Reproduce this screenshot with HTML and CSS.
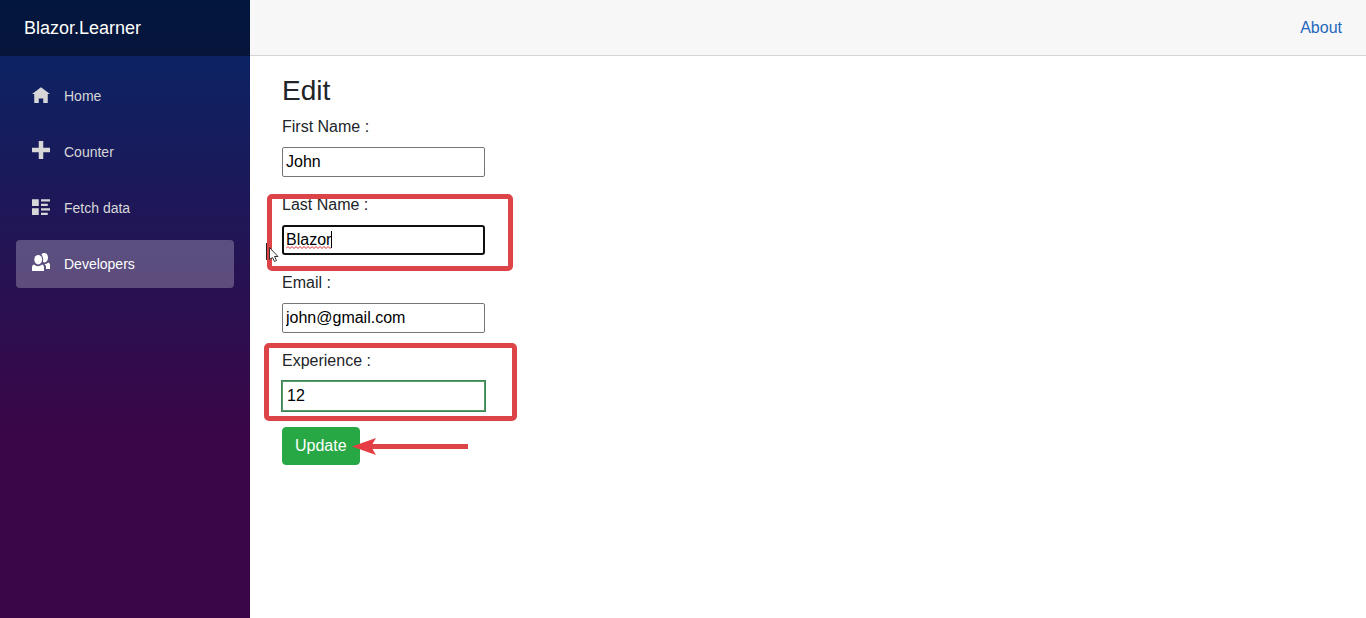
FILE: index.html
```html
<!DOCTYPE html>
<html lang="en">
<head>
<meta charset="utf-8">
<meta name="viewport" content="width=device-width, initial-scale=1">
<title>Blazor.Learner</title>
<link rel="stylesheet" href="styles.css">
</head>
<body>
<div class="app">
  <aside class="sidebar">
    <div class="brand-row"><a class="brand" href="#">Blazor.Learner</a></div>
    <nav class="nav">
      <a class="nav-link" href="#"><svg class="icon" viewBox="0 -1 8 8" aria-hidden="true"><path d="M4 0l-4 3h1v4h2v-2h2v2h2v-4.03l1 .03-4-3z"/></svg><span>Home</span></a>
      <a class="nav-link" href="#"><svg class="icon" viewBox="0 0 8 8" aria-hidden="true"><path d="M3 0v3h-3v2h3v3h2v-3h3v-2h-3v-3h-2z"/></svg><span>Counter</span></a>
      <a class="nav-link" href="#"><svg class="icon" viewBox="0 -1 8 8" aria-hidden="true"><path d="M0 0v3h3v-3h-3zm4 0v1h4v-1h-4zm0 2v1h3v-1h-3zm-4 2v3h3v-3h-3zm4 0v1h4v-1h-4zm0 2v1h3v-1h-3z"/></svg><span>Fetch data</span></a>
      <a class="nav-link active" href="#" aria-current="page"><svg class="icon" viewBox="0 0 18 18" aria-hidden="true"><ellipse cx="6.200" cy="6.700" rx="3.900" ry="4.800"/><path d="M0 18v-4q0-2 1.800-2.600 4.200 3.600 8.400 0 1.800.6 1.800 2.600v4z"/><path d="M9.300 1.400C10.300.4 11.300 0 12.500 0c2 0 3.500 2 3.500 4.700s-1.500 4.700-3.300 4.700c-.7 0-1.300-.2-1.800-.5.600-2.500.200-5.600-1.600-7.500z"/><path d="M12.300 11c1.500 0 2.900-.5 3.900-1.500 1.200.5 1.800 1.400 1.800 2.500v4h-4v-2c0-1.200-.7-2.300-1.700-3z"/></svg><span>Developers</span></a>
    </nav>
  </aside>
  <div class="main">
    <header class="top-row"><a class="about" href="#">About</a></header>
    <main class="content">
      <h3 class="title">Edit</h3>
      <form class="form">
        <div class="form-group">
          <label for="first">First Name :</label>
          <input class="field" id="first" type="text" value="John">
        </div>
        <div class="form-group">
          <label for="last">Last Name :</label>
          <input class="field field-focus" id="last" type="text" value="Blazor" spellcheck="false">
          <svg class="squiggle" viewBox="0 0 46 3" aria-hidden="true"><path d="M0 2.5l2-2 2 2 2-2 2 2 2-2 2 2 2-2 2 2 2-2 2 2 2-2 2 2 2-2 2 2 2-2 2 2 2-2 2 2 2-2 2 2 2-2 2 2 2-2"/></svg>
          <span class="caret"></span>
          <span class="mark mark-last"></span>
          <svg class="pointer" viewBox="0 0 13 20" aria-hidden="true"><path class="pointer-bar" d="M0 0h1v17h-1z"/><path class="pointer-shape" d="M3.5 4.5v12l3-2 2 4 2-1-2-4h3.500z"/></svg>
        </div>
        <div class="form-group">
          <label for="email">Email :</label>
          <input class="field" id="email" type="text" value="john@gmail.com">
        </div>
        <div class="form-group">
          <label for="exp">Experience :</label>
          <input class="field field-valid" id="exp" type="text" value="12">
          <span class="mark mark-exp"></span>
        </div>
        <div class="actions">
          <button class="btn" type="button">Update</button>
          <svg class="arrow" viewBox="0 0 117 18" aria-hidden="true"><path class="arrow-line" d="M17 7h99v5h-99z"/><path class="arrow-head" d="M0 9.500l24-8.500-5 8.500 5 8.500z"/></svg>
        </div>
      </form>
    </main>
  </div>
</div>
</body>
</html>
```
FILE: styles.css
```css
*, *::before, *::after { box-sizing: border-box; }
body {
  margin: 0;
  font: 16px/24px "Liberation Sans", Arial, sans-serif;
  color: #212529;
  background: #fff;
}
a { text-decoration: none; }
.app { display: flex; min-height: 100vh; }

.sidebar {
  flex: 0 0 250px;
  background: linear-gradient(180deg, #052767 0%, #3a0647 70%);
}
.brand-row {
  display: flex;
  align-items: center;
  height: 56px;
  padding: 0 24px;
  background: rgba(0, 0, 0, 0.4);
}
.brand { font-size: 18px; color: #fff; }
.nav { display: flex; flex-direction: column; gap: 8px; padding: 16px; }
.nav-link {
  display: flex;
  align-items: center;
  gap: 14px;
  height: 48px;
  padding: 0 16px;
  border-radius: 4px;
  font-size: 14px;
  color: #d7d7d7;
}
.nav-link.active { background: rgba(255, 255, 255, 0.25); color: #fff; }
.icon { width: 18px; height: 18px; margin-bottom: 4px; fill: currentColor; }

.main { flex: 1; min-width: 0; }
.top-row {
  display: flex;
  align-items: center;
  justify-content: flex-end;
  height: 56px;
  padding: 0 24px;
  background: #f7f7f7;
  border-bottom: 1px solid #d6d5d5;
}
.about { color: #1f68bd; }
.content { padding: 18px 32px; }
.title { margin: 0 0 7px; font-size: 28px; line-height: 34px; font-weight: 400; }
.form-group {
  position: relative;
  display: flex;
  flex-direction: column;
  align-items: flex-start;
  gap: 8px;
  margin-bottom: 16px;
}
.field {
  width: 203px;
  height: 30px;
  padding: 0 3px;
  border: 1px solid #767676;
  border-radius: 2px;
  background: #fff;
  font: inherit;
  color: #000;
}
.field-focus { border: 2px solid #101010; border-radius: 3px; padding: 0 2px; }
.field-valid { padding: 0 4px; border-color: #559a68; border-radius: 0; outline: 1px solid #3c8753; }

.squiggle {
  position: absolute;
  left: 4px;
  top: 53px;
  width: 46px;
  height: 3px;
  fill: none;
  stroke: #dc3038;
}
.caret { position: absolute; left: 49px; top: 38px; width: 1px; height: 17px; background: #000; }
.mark { position: absolute; border: 5px solid #dc4448; border-radius: 5px; pointer-events: none; }
.mark-last { left: -15px; top: 1px; width: 246px; height: 77px; }
.mark-exp { left: -18px; top: -6px; width: 253px; height: 78px; }
.pointer { position: absolute; left: -16px; top: 50px; width: 13px; height: 20px; }
.pointer-bar { fill: #222; }
.pointer-shape { fill: #fff; stroke: #333; }

.actions { position: relative; display: flex; }
.btn {
  height: 38px;
  padding: 0 12px;
  border: 1px solid #28a745;
  border-radius: 4px;
  background: #28a745;
  color: #fff;
  font: inherit;
}
.arrow { position: absolute; left: 70px; top: 10px; width: 117px; height: 18px; }
.arrow-line { fill: #dc4448; }
.arrow-head { fill: #e53d43; }
```
